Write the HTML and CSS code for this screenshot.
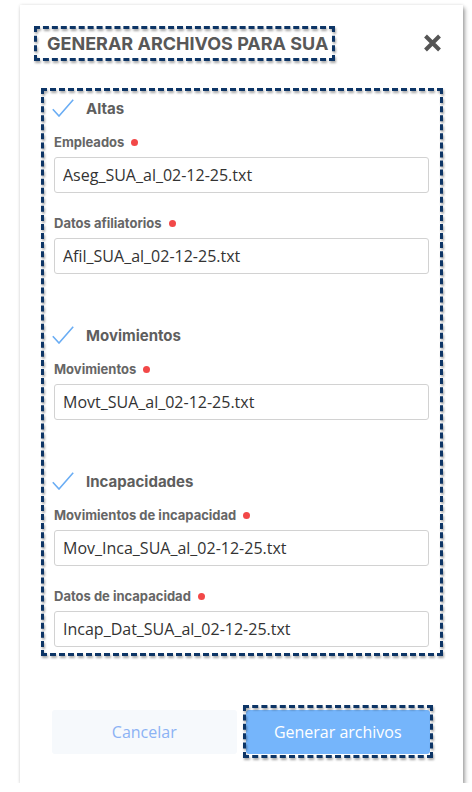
FILE: index.html
```html
<!DOCTYPE html>
<html lang="es">
<head>
  <meta charset="UTF-8">
  <title>Generar archivos para SUA</title>
  <meta name="viewport" content="width=device-width, initial-scale=1.0" />
  <link rel="stylesheet" href="styles.css">
</head>
<body>
  <div class="modal">
    <div class="modal-header">
      <h2 class="modal-title mark">GENERAR ARCHIVOS PARA SUA</h2>
      <button type="button" class="close-btn" aria-label="Cerrar">
        <svg width="19" height="18" viewBox="0 0 19 18">
          <path d="M2.5 2 L16.5 16 M16.5 2 L2.5 16" stroke="#555" stroke-width="4" fill="none" />
        </svg>
      </button>
    </div>

    <div class="files mark">
      <section class="file-group">
        <div class="group-head">
          <svg class="check" width="22" height="18" viewBox="0 0 22 18">
            <path d="M0.8 10.2 L7 17 L21.2 0.8" stroke="#6aadf4" stroke-width="1.6" fill="none" />
          </svg>
          <span>Altas</span>
        </div>
        <div class="field">
          <label>Empleados <span class="req"></span></label>
          <input type="text" value="Aseg_SUA_al_02-12-25.txt" readonly />
        </div>
        <div class="field">
          <label>Datos afiliatorios <span class="req"></span></label>
          <input type="text" value="Afil_SUA_al_02-12-25.txt" readonly />
        </div>
      </section>

      <section class="file-group">
        <div class="group-head">
          <svg class="check" width="22" height="18" viewBox="0 0 22 18">
            <path d="M0.8 10.2 L7 17 L21.2 0.8" stroke="#6aadf4" stroke-width="1.6" fill="none" />
          </svg>
          <span>Movimientos</span>
        </div>
        <div class="field">
          <label>Movimientos <span class="req"></span></label>
          <input type="text" value="Movt_SUA_al_02-12-25.txt" readonly />
        </div>
      </section>

      <section class="file-group">
        <div class="group-head">
          <svg class="check" width="22" height="18" viewBox="0 0 22 18">
            <path d="M0.8 10.2 L7 17 L21.2 0.8" stroke="#6aadf4" stroke-width="1.6" fill="none" />
          </svg>
          <span>Incapacidades</span>
        </div>
        <div class="field">
          <label>Movimientos de incapacidad <span class="req"></span></label>
          <input type="text" value="Mov_Inca_SUA_al_02-12-25.txt" readonly />
        </div>
        <div class="field">
          <label>Datos de incapacidad <span class="req"></span></label>
          <input type="text" value="Incap_Dat_SUA_al_02-12-25.txt" readonly />
        </div>
      </section>
    </div>

    <div class="modal-footer">
      <button type="button" class="btn btn-cancel">Cancelar</button>
      <button type="button" class="btn btn-primary mark">Generar archivos</button>
    </div>
  </div>
</body>
</html>
```

FILE: styles.css
```css
body {
    margin: 0;
    background: #fff;
    font-family: Inter, Roboto, "Liberation Sans", sans-serif;
}

.modal {
    box-sizing: border-box;
    width: 443px;
    height: 778px;
    margin: 5px 0 0 20px;
    background: #fff;
    display: flex;
    flex-direction: column;
    box-shadow: 2px 3px 4px rgba(0, 0, 0, 0.35), 0 0 3px rgba(0, 0, 0, 0.12);
}

/* dashed call-out boxes */
.mark {
    position: relative;
}

.mark::after {
    content: "";
    position: absolute;
    top: 0;
    right: 0;
    bottom: 0;
    left: 0;
    border: 3px dashed #0d3566;
    filter: drop-shadow(1px 2px 1px rgba(0, 0, 0, 0.35));
    pointer-events: none;
}

.modal-header {
    display: flex;
    justify-content: space-between;
    align-items: center;
    padding: 21px 21px 0 14px;
}

.modal-title {
    margin: 0;
    padding: 7px 7px 7px 13px;
    font-size: 18px;
    line-height: 21px;
    font-weight: 700;
    color: #585858;
}

.close-btn {
    border: 0;
    background: none;
    padding: 0;
    display: flex;
    margin-top: -2px;
}

.files {
    margin: 27px 20px 0 21px;
    padding: 9px 14px 9px 13px;
}

.file-group + .file-group {
    margin-top: 50px;
}

.group-head {
    display: flex;
    align-items: center;
    height: 22px;
    margin-bottom: 15px;
    font-size: 15px;
    font-weight: 700;
    color: #5e5e5e;
}

.group-head .check {
    margin: -1px 12px 0 -2px;
}

.field + .field {
    margin-top: 22px;
}

.field label {
    display: flex;
    align-items: center;
    height: 16px;
    margin-bottom: 7px;
    font-size: 13px;
    font-weight: 700;
    color: #666;
}

.req {
    width: 7px;
    height: 7px;
    margin: 1px 0 0 7px;
    border-radius: 50%;
    background: #f24848;
}

.field input {
    box-sizing: border-box;
    width: 100%;
    height: 36px;
    margin: 0;
    padding: 0 8px;
    border: 1px solid #d2d2d2;
    border-radius: 3px;
    font-family: "Open Sans", sans-serif;
    font-size: 16px;
    color: #333;
    outline: none;
}

.modal-footer {
    margin-top: auto;
    display: grid;
    grid-template-columns: 1fr 1fr;
    column-gap: 9px;
    padding: 0 33px 29px 32px;
}

.btn {
    height: 44px;
    border: 0;
    border-radius: 3px;
    font-family: "Open Sans", sans-serif;
    font-size: 16px;
}

.btn-cancel {
    background: #f6f9fc;
    color: #8bb2f4;
}

.btn-primary {
    background: #75b5fb;
    color: #fff;
}

.btn-primary::after {
    top: -5px;
    right: -3px;
    bottom: -4px;
    left: -3px;
}
```
